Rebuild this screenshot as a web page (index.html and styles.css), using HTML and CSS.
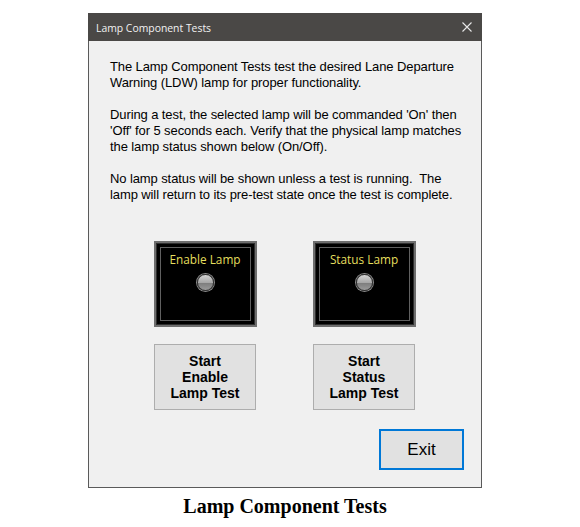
FILE: index.html
```html
<!DOCTYPE html>
<html>
<head>
<meta charset="utf-8">
<link rel="stylesheet" href="styles.css">
</head>
<body>
<div class="page">
  <div class="window">
    <div class="titlebar">
      <span class="title">Lamp Component Tests</span>
      <svg class="close" width="10" height="10" viewBox="0 0 10 10"><path d="M0.5 0.5L9.5 9.5M9.5 0.5L0.5 9.5" stroke="#e8e8e8" stroke-width="1.1" fill="none"/></svg>
    </div>
    <div class="content">
      <p class="para">The Lamp Component Tests test the desired Lane Departure Warning (LDW) lamp for proper functionality.</p>
      <p class="para">During a test, the selected lamp will be commanded 'On' then 'Off' for 5 seconds each. Verify that the physical lamp matches the lamp status shown below (On/Off).</p>
      <p class="para">No lamp status will be shown unless a test is running.&nbsp; The lamp will return to its pre-test state once the test is complete.</p>
      <div class="lamps">
        <div class="col">
          <div class="panel"><div class="inner"><span class="lamp-label">Enable Lamp</span><span class="bulb"></span></div></div>
          <button class="btn">Start<br>Enable<br>Lamp Test</button>
        </div>
        <div class="col">
          <div class="panel"><div class="inner"><span class="lamp-label">Status Lamp</span><span class="bulb"></span></div></div>
          <button class="btn">Start<br>Status<br>Lamp Test</button>
        </div>
      </div>
      <div class="footer">
        <button class="exit">Exit</button>
      </div>
    </div>
  </div>
  <div class="caption">Lamp Component Tests</div>
</div>
</body>
</html>
```
FILE: styles.css
```css
html, body {
  margin: 0;
  padding: 0;
  background: #ffffff;
}
.page {
  width: 580px;
  height: 527px;
  display: flex;
  flex-direction: column;
  align-items: flex-start;
}
.window {
  margin-left: 88px;
  margin-top: 13px;
  width: 394px;
  height: 475px;
  box-sizing: border-box;
  border: 1px solid #5a5a5a;
  border-top: none;
  background: #f0f0f0;
  display: flex;
  flex-direction: column;
}
.titlebar {
  height: 28px;
  margin: 0 -1px;
  background: #4a4846;
  display: flex;
  align-items: center;
  justify-content: space-between;
  padding: 0 10px 0 8px;
}
.title {
  font-family: "Open Sans", "Noto Sans", sans-serif;
  font-size: 10.4px;
  color: #f2f2f2;
  padding-top: 1px;
}
.close {
  display: block;
}
.content {
  flex: 1;
  display: flex;
  flex-direction: column;
  padding: 18px 14px 17px 21px;
}
.para {
  margin: 0 0 16px 0;
  font-family: "Liberation Sans", Arial, sans-serif;
  font-size: 13px;
  letter-spacing: -0.1px;
  line-height: 16px;
  color: #000;
}
.lamps {
  display: flex;
  justify-content: center;
  gap: 56px;
  margin-top: 22px;
  margin-left: -3px;
  margin-right: 5px;
}
.col {
  display: flex;
  flex-direction: column;
  align-items: center;
  gap: 17px;
}
.panel {
  width: 103px;
  height: 86px;
  box-sizing: border-box;
  background: #000;
  border: 2px solid #6e6e6e;
  box-shadow: inset 0 0 0 1px #2e2e2e, inset 0 0 0 2px #000;
  padding: 4px;
}
.inner {
  width: 100%;
  height: 100%;
  box-sizing: border-box;
  border: 1px solid #606060;
  display: flex;
  flex-direction: column;
  align-items: center;
}
.lamp-label {
  font-family: "Open Sans", "Noto Sans", sans-serif;
  font-size: 11.8px;
  color: #e5df5e;
  margin-top: 3px;
  line-height: 16px;
}
.bulb {
  width: 17px;
  height: 17px;
  border-radius: 50%;
  margin-top: 7px;
  box-sizing: border-box;
  border: 1px solid #3c3c3c;
  background: linear-gradient(#d4d4d4 0%, #a8a8a8 50%, #7e7e7e 55%, #9a9a9a 100%);
  box-shadow: 0 0 0 1px #8a8a8a;
}
.btn {
  width: 102px;
  height: 66px;
  box-sizing: border-box;
  border: 1px solid #adadad;
  background: #e1e1e1;
  font-family: "Liberation Sans", Arial, sans-serif;
  font-weight: bold;
  font-size: 14px;
  line-height: 16px;
  color: #000;
  padding: 0;
}
.footer {
  margin-top: auto;
  display: flex;
  justify-content: flex-end;
  margin-right: 3px;
}
.exit {
  width: 85px;
  height: 41px;
  box-sizing: border-box;
  border: 2px solid #0078d7;
  background: #e1e1e1;
  font-family: "Liberation Sans", Arial, sans-serif;
  font-size: 17px;
  color: #000;
  padding: 0;
}
.caption {
  width: 580px;
  text-align: center;
  font-family: "Liberation Serif", "Times New Roman", serif;
  font-weight: bold;
  font-size: 20px;
  margin-top: 7px;
  line-height: 23px;
  color: #000;
  box-sizing: border-box;
  padding-right: 10px;
}
```
